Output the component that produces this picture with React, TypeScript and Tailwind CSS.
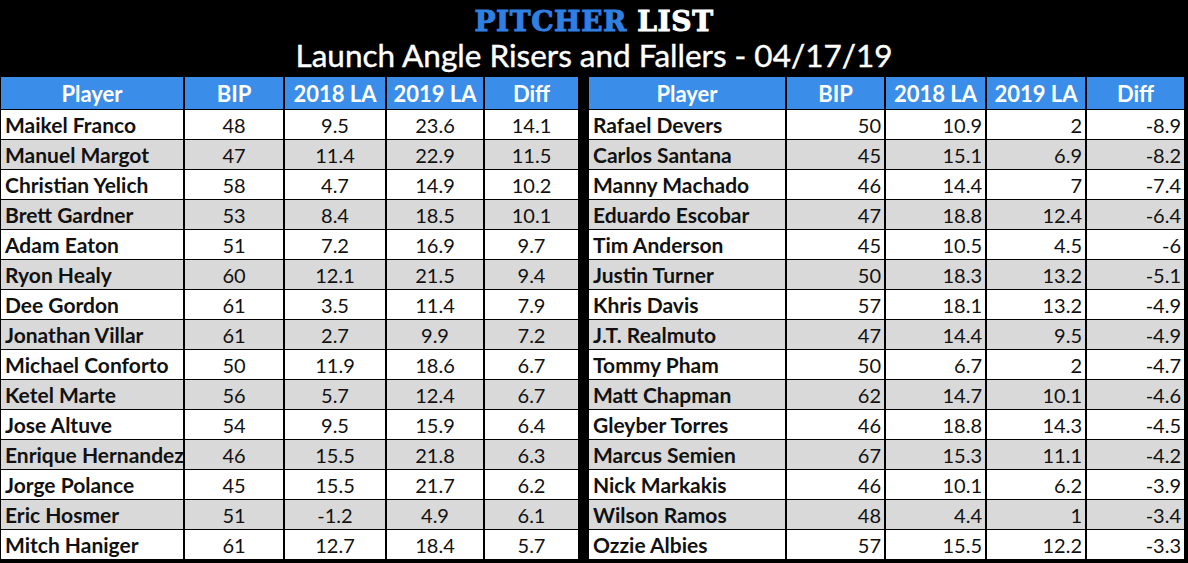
import React from 'react';

type Row = [string, number, number, number, number];

const risers: Row[] = [
  ['Maikel Franco', 48, 9.5, 23.6, 14.1],
  ['Manuel Margot', 47, 11.4, 22.9, 11.5],
  ['Christian Yelich', 58, 4.7, 14.9, 10.2],
  ['Brett Gardner', 53, 8.4, 18.5, 10.1],
  ['Adam Eaton', 51, 7.2, 16.9, 9.7],
  ['Ryon Healy', 60, 12.1, 21.5, 9.4],
  ['Dee Gordon', 61, 3.5, 11.4, 7.9],
  ['Jonathan Villar', 61, 2.7, 9.9, 7.2],
  ['Michael Conforto', 50, 11.9, 18.6, 6.7],
  ['Ketel Marte', 56, 5.7, 12.4, 6.7],
  ['Jose Altuve', 54, 9.5, 15.9, 6.4],
  ['Enrique Hernandez', 46, 15.5, 21.8, 6.3],
  ['Jorge Polance', 45, 15.5, 21.7, 6.2],
  ['Eric Hosmer', 51, -1.2, 4.9, 6.1],
  ['Mitch Haniger', 61, 12.7, 18.4, 5.7],
];

const fallers: Row[] = [
  ['Rafael Devers', 50, 10.9, 2, -8.9],
  ['Carlos Santana', 45, 15.1, 6.9, -8.2],
  ['Manny Machado', 46, 14.4, 7, -7.4],
  ['Eduardo Escobar', 47, 18.8, 12.4, -6.4],
  ['Tim Anderson', 45, 10.5, 4.5, -6],
  ['Justin Turner', 50, 18.3, 13.2, -5.1],
  ['Khris Davis', 57, 18.1, 13.2, -4.9],
  ['J.T. Realmuto', 47, 14.4, 9.5, -4.9],
  ['Tommy Pham', 50, 6.7, 2, -4.7],
  ['Matt Chapman', 62, 14.7, 10.1, -4.6],
  ['Gleyber Torres', 46, 18.8, 14.3, -4.5],
  ['Marcus Semien', 67, 15.3, 11.1, -4.2],
  ['Nick Markakis', 46, 10.1, 6.2, -3.9],
  ['Wilson Ramos', 48, 4.4, 1, -3.4],
  ['Ozzie Albies', 57, 15.5, 12.2, -3.3],
];

const headers = ['Player', 'BIP', '2018 LA', '2019 LA', 'Diff'];

function StatTable({ rows, cols, align }: { rows: Row[]; cols: string; align: 'center' | 'right' }) {
  const numCls = align === 'center' ? 'justify-center' : 'justify-end pr-[3px]';
  return (
    <div className={`grid ${cols} grid-rows-[32px_repeat(15,29px)] gap-x-[2px] gap-y-[1px]`}>
      {headers.map((h) => (
        <div key={h} className="bg-[#3a8eea] text-white font-bold text-[22px] flex items-center justify-center">
          {h}
        </div>
      ))}
      {rows.map((r, i) => {
        const bg = i % 2 === 1 ? 'bg-[#d9d9d9]' : 'bg-white';
        return (
          <React.Fragment key={r[0]}>
            <div className={`${bg} font-bold text-[21px] pl-[4px] flex items-center whitespace-nowrap overflow-hidden`}>
              {r[0]}
            </div>
            {r.slice(1).map((v, j) => (
              <div key={j} className={`${bg} text-[20px] flex items-center ${numCls}`}>
                {v}
              </div>
            ))}
          </React.Fragment>
        );
      })}
    </div>
  );
}

export default function App() {
  return (
    <div
      className="w-[1188px] h-[563px] bg-black text-[#111] overflow-hidden"
      style={{ fontFamily: 'Lato, "Noto Sans", sans-serif' }}
    >
      <div className="h-[77px] flex flex-col items-center">
        <div
          className="mt-[7px] text-[28px] font-bold leading-[30px] tracking-[0.6px]"
          style={{ fontFamily: '"DejaVu Serif", serif' }}
        >
          <span className="text-[#2f80e2] [-webkit-text-stroke:1px_#2f80e2]">PITCHER</span>{' '}
          <span className="text-white [-webkit-text-stroke:1px_white]">LIST</span>
        </div>
        <div className="text-white text-[31.5px] leading-[36px] [-webkit-text-stroke:0.4px_white]">
          Launch Angle Risers and Fallers - 04/17/19
        </div>
      </div>
      <div className="flex pl-[1px]">
        <StatTable rows={risers} cols="grid-cols-[182px_98px_100px_96px_93px]" align="center" />
        <div className="w-[11px]" />
        <StatTable rows={fallers} cols="grid-cols-[196px_97px_99px_98px_97px]" align="right" />
      </div>
    </div>
  );
}
